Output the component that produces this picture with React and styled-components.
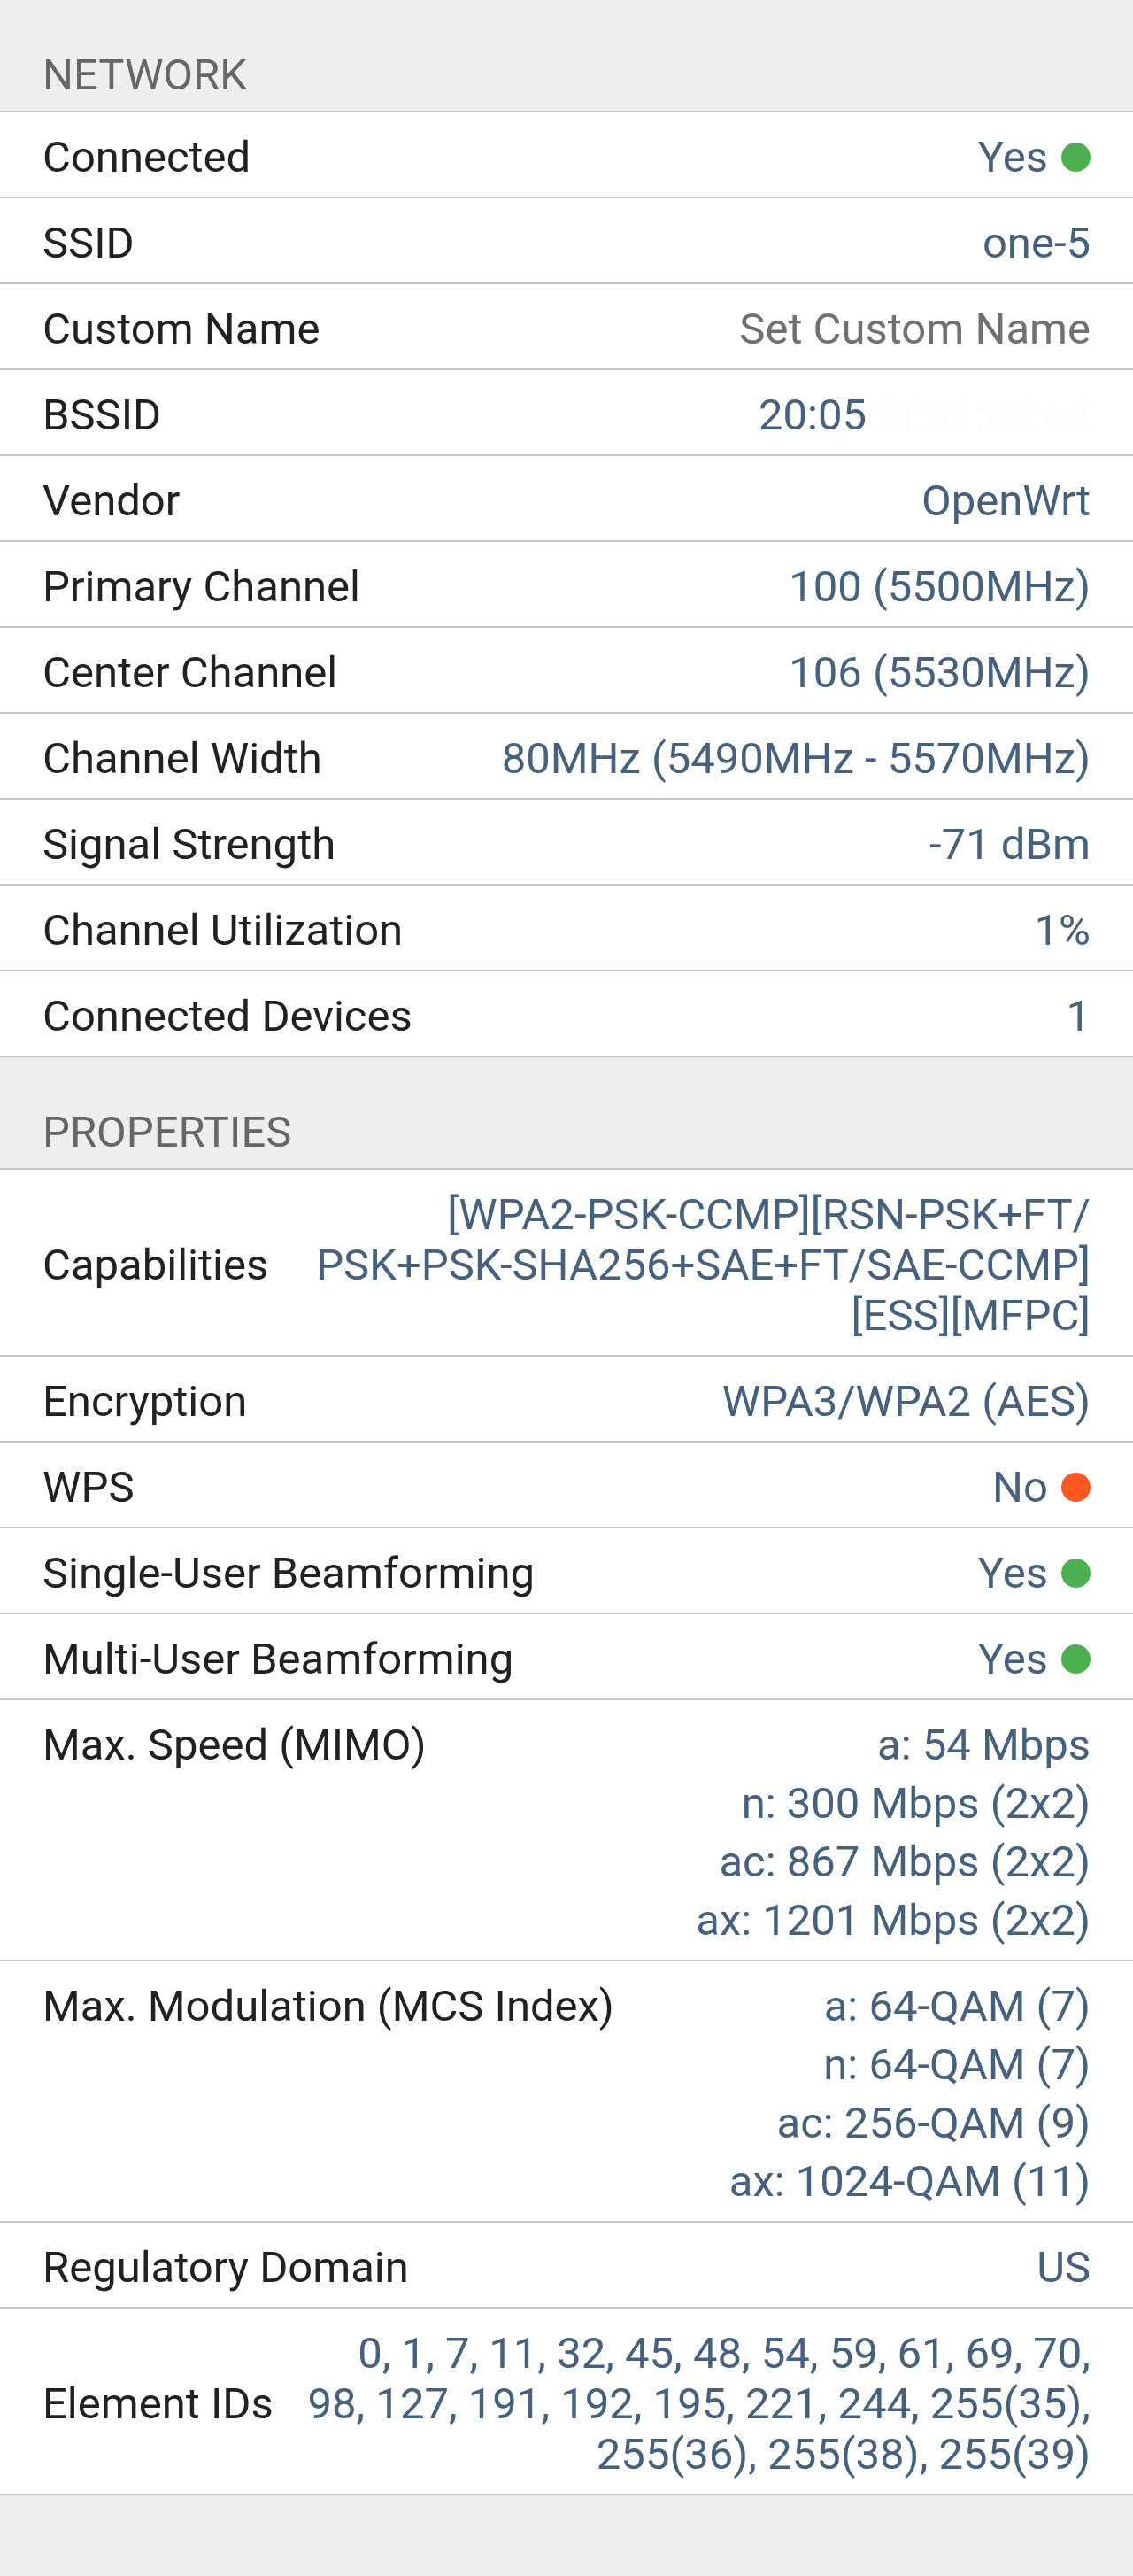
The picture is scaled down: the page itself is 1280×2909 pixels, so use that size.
import React from "react";
import styled, { createGlobalStyle } from "styled-components";

const GlobalStyle = createGlobalStyle`
    html, body {
        margin: 0;
        padding: 0;
        background: #eeeeee;
    }
    body {
        font-family: Roboto, "Noto Sans", "Liberation Sans", sans-serif;
        -webkit-font-smoothing: antialiased;
    }
`;

const network = [
    { label: "Connected", lines: ["Yes"], dot: "ok" },
    { label: "SSID", lines: ["one-5"] },
    { label: "Custom Name", lines: ["Set Custom Name"], hint: true },
    { label: "BSSID", masked: true },
    { label: "Vendor", lines: ["OpenWrt"] },
    { label: "Primary Channel", lines: ["100 (5500MHz)"] },
    { label: "Center Channel", lines: ["106 (5530MHz)"] },
    { label: "Channel Width", lines: ["80MHz (5490MHz - 5570MHz)"] },
    { label: "Signal Strength", lines: ["-71 dBm"] },
    { label: "Channel Utilization", lines: ["1%"] },
    { label: "Connected Devices", lines: ["1"] },
];

const properties = [
    {
        label: "Capabilities",
        lines: [
            "[WPA2-PSK-CCMP][RSN-PSK+FT/",
            "PSK+PSK-SHA256+SAE+FT/SAE-CCMP]",
            "[ESS][MFPC]",
        ],
    },
    { label: "Encryption", lines: ["WPA3/WPA2 (AES)"] },
    { label: "WPS", lines: ["No"], dot: "bad" },
    { label: "Single-User Beamforming", lines: ["Yes"], dot: "ok" },
    { label: "Multi-User Beamforming", lines: ["Yes"], dot: "ok" },
    {
        label: "Max. Speed (MIMO)",
        lines: ["a: 54 Mbps", "n: 300 Mbps (2x2)", "ac: 867 Mbps (2x2)", "ax: 1201 Mbps (2x2)"],
        list: true,
    },
    {
        label: "Max. Modulation (MCS Index)",
        lines: ["a: 64-QAM (7)", "n: 64-QAM (7)", "ac: 256-QAM (9)", "ax: 1024-QAM (11)"],
        list: true,
    },
    { label: "Regulatory Domain", lines: ["US"] },
    {
        label: "Element IDs",
        lines: [
            "0, 1, 7, 11, 32, 45, 48, 54, 59, 61, 69, 70,",
            "98, 127, 191, 192, 195, 221, 244, 255(35),",
            "255(36), 255(38), 255(39)",
        ],
    },
];

const InfoRow = ({ item }) => (
    <Row $top={item.list}>
        <Label>{item.label}</Label>
        <Value $hint={item.hint} $gap={item.list ? 9 : 0}>
            {item.masked ? (
                <Line>
                    20:05<Masked>:3f:a1:c8:e4</Masked>
                </Line>
            ) : (
                item.lines.map((line, i) => (
                    <Line key={i}>
                        {line}
                        {item.dot && <Dot $status={item.dot} />}
                    </Line>
                ))
            )}
        </Value>
    </Row>
);

const App = () => {
    return (
        <>
            <GlobalStyle />
            <Screen>
                <SectionHeader>NETWORK</SectionHeader>
                {network.map((item) => (
                    <InfoRow key={item.label} item={item} />
                ))}
                <SectionHeader>PROPERTIES</SectionHeader>
                {properties.map((item) => (
                    <InfoRow key={item.label} item={item} />
                ))}
            </Screen>
        </>
    );
};

const Screen = styled.main`
    width: 1280px;
    min-height: 2909px;
    background: #eeeeee;
    font-size: 49px;
`;

const SectionHeader = styled.h2`
    box-sizing: border-box;
    height: 127px;
    margin: 0;
    padding: 0 48px 12px;
    display: flex;
    align-items: flex-end;
    font-size: 49px;
    font-weight: 400;
    line-height: 57px;
    color: #666666;
    border-bottom: 2px solid #c6c6c6;
`;

const Row = styled.div`
    box-sizing: border-box;
    min-height: 97px;
    padding: 22px 48px 16px;
    display: flex;
    justify-content: space-between;
    align-items: ${(p) => (p.$top ? "flex-start" : "center")};
    gap: 26px;
    background: #ffffff;
    border-bottom: 2px solid #c6c6c6;
    line-height: 57px;
`;

const Label = styled.div`
    flex: 0 0 auto;
    color: #212121;
    white-space: nowrap;
`;

const Value = styled.div`
    flex: 0 0 auto;
    display: flex;
    flex-direction: column;
    align-items: flex-end;
    gap: ${(p) => p.$gap}px;
    color: ${(p) => (p.$hint ? "#707070" : "#46617d")};
    text-align: right;
`;

const Line = styled.div`
    display: flex;
    align-items: center;
    white-space: nowrap;
`;

const Dot = styled.span`
    width: 33px;
    height: 33px;
    margin-left: 15px;
    border-radius: 50%;
    background: ${(p) => (p.$status === "ok" ? "#4caf50" : "#ff5722")};
`;

const Masked = styled.span`
    color: #fcfcfd;
`;

export default App;
